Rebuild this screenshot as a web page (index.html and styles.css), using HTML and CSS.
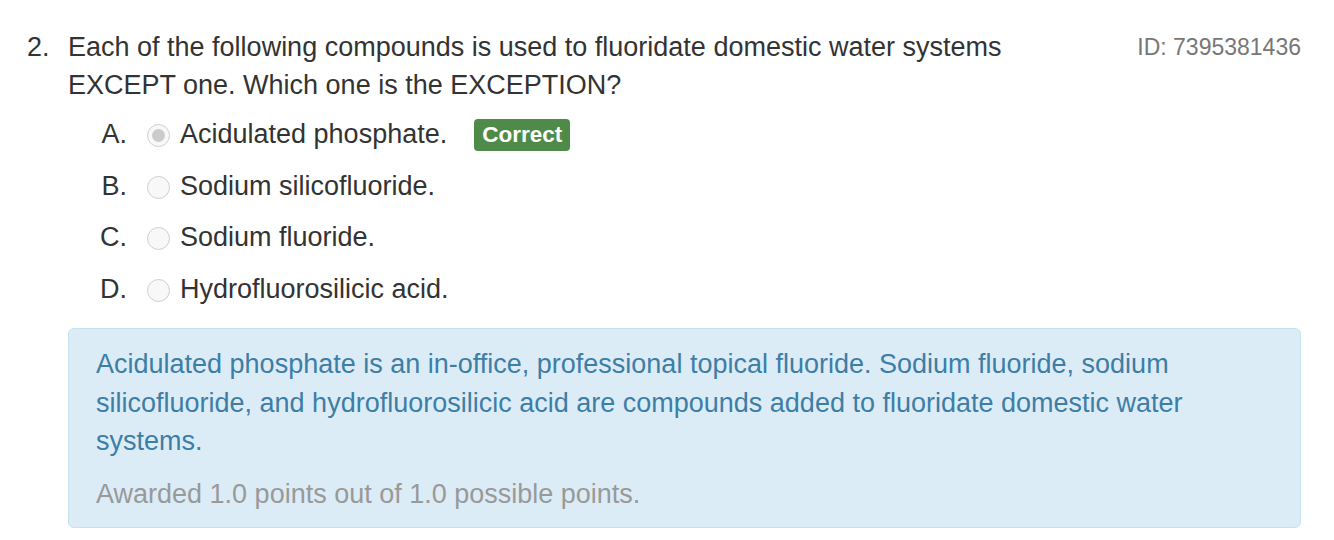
FILE: index.html
```html
<!DOCTYPE html>
<html>
<head>
<meta charset="utf-8">
<link rel="stylesheet" href="styles.css">
</head>
<body>
<div class="question">
  <div class="q-head">
    <div class="q-num">2.</div>
    <div class="q-text">Each of the following compounds is used to fluoridate domestic water systems EXCEPT one. Which one is the EXCEPTION?</div>
    <div class="q-id">ID: 7395381436</div>
  </div>
  <ul class="options">
    <li class="option"><span class="letter">A.</span><span class="radio checked"></span><span class="opt-text">Acidulated phosphate.</span><span class="badge">Correct</span></li>
    <li class="option"><span class="letter">B.</span><span class="radio"></span><span class="opt-text">Sodium silicofluoride.</span></li>
    <li class="option"><span class="letter">C.</span><span class="radio"></span><span class="opt-text">Sodium fluoride.</span></li>
    <li class="option"><span class="letter">D.</span><span class="radio"></span><span class="opt-text">Hydrofluorosilicic acid.</span></li>
  </ul>
  <div class="explain">
    <p class="explain-text">Acidulated phosphate is an in-office, professional topical fluoride. Sodium fluoride, sodium silicofluoride, and hydrofluorosilicic acid are compounds added to fluoridate domestic water systems.</p>
    <p class="awarded">Awarded 1.0 points out of 1.0 possible points.</p>
  </div>
</div>
</body>
</html>
```

FILE: styles.css
```css
html, body {
  margin: 0;
  padding: 0;
  background: #fff;
}
body {
  font-family: "Liberation Sans", Arial, sans-serif;
  font-size: 27px;
  color: #333;
}
.question {
  padding: 28px 32px 0 27px;
  width: 1274px;
}
.q-head {
  display: flex;
  line-height: 38px;
}
.q-num {
  width: 41px;
  flex: none;
}
.q-text {
  flex: 1;
  padding-right: 40px;
}
.q-id {
  flex: none;
  color: #777;
  font-size: 23px;
}
.options {
  list-style: none;
  margin: 5px 0 0 0;
  padding: 0;
}
.option {
  display: flex;
  align-items: center;
  height: 51.5px;
}
.letter {
  width: 100px;
  text-align: right;
  flex: none;
}
.radio {
  width: 21px;
  height: 21px;
  border: 1px solid #cfcfcf;
  border-radius: 50%;
  background: #f8f8f8;
  margin-left: 20px;
  margin-right: 10px;
  margin-top: 2px;
  flex: none;
  display: flex;
  align-items: center;
  justify-content: center;
}
.radio.checked::after {
  content: "";
  width: 13px;
  height: 13px;
  border-radius: 50%;
  background: #cbcbcb;
}
.badge {
  margin-left: 27px;
  background: #4f8b48;
  color: #fff;
  font-weight: bold;
  font-size: 22.5px;
  line-height: 32px;
  padding: 0 8px;
  border-radius: 4px;
}
.explain {
  margin: 13px 0 0 41px;
  background: #dcecf7;
  border: 1px solid #c4e3f0;
  border-radius: 6px;
  padding: 16px 27px 14px 27px;
  line-height: 38.5px;
}
.explain p {
  margin: 0;
}
.explain-text {
  color: #3d7ea6;
}
.awarded {
  color: #999;
  margin-top: 14px !important;
}
```
